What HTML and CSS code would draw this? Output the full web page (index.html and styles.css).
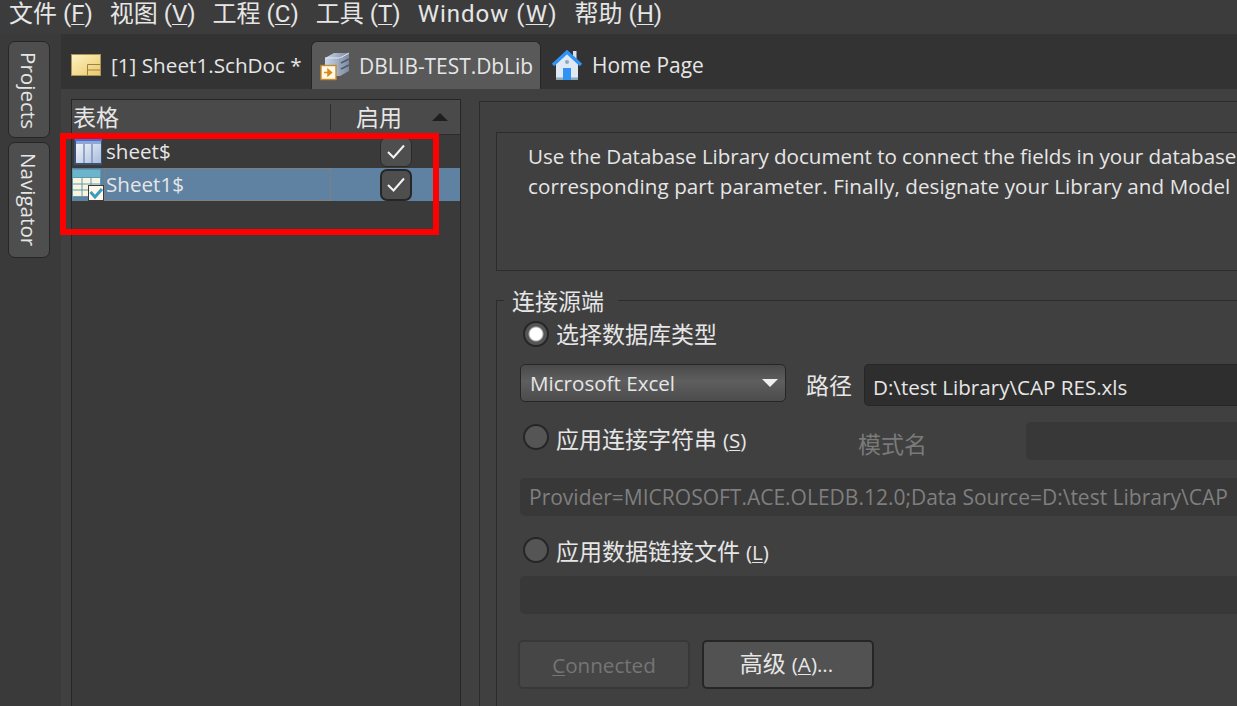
FILE: index.html
```html
<!DOCTYPE html>
<html lang="zh-CN">
<head>
  <meta charset="UTF-8">
  <title>DBLIB-TEST.DbLib</title>
  <link rel="stylesheet" href="styles.css">
</head>
<body>
  <div class="menu-bar">
    <span>文件 (<u>F</u>)</span>
    <span>视图 (<u>V</u>)</span>
    <span>工程 (<u>C</u>)</span>
    <span>工具 (<u>T</u>)</span>
    <span class="menu-latin">Window (<u>W</u>)</span>
    <span>帮助 (<u>H</u>)</span>
  </div>
  <div class="workspace">
    <div class="side-rail">
      <div class="side-tab tab-projects"><span>Projects</span></div>
      <div class="side-tab tab-navigator"><span>Navigator</span></div>
    </div>
    <div class="main">
      <div class="doc-tabs">
        <div class="doc-tab tab-sheet">
          <svg class="tab-icon" width="30" height="22" viewBox="0 0 30 22">
            <defs><linearGradient id="sheetFill" x1="0" y1="0" x2="1" y2="1"><stop offset="0" stop-color="#fdf3c4"/><stop offset="1" stop-color="#edc868"/></linearGradient></defs>
            <rect x="0.5" y="0.5" width="29" height="21" fill="url(#sheetFill)" stroke="#a8965c"/>
            <path d="M16.5 21V10.5H29.5M16.5 16H29.5" fill="none" stroke="#9a8445" stroke-width="1"/>
          </svg>
          <span>[1] Sheet1.SchDoc *</span>
        </div>
        <div class="doc-tab tab-dblib active">
          <svg class="tab-icon" width="30" height="30" viewBox="0 0 30 30">
            <defs><linearGradient id="boxFill" x1="0" y1="0" x2="1" y2="0"><stop offset="0" stop-color="#c9d6ea"/><stop offset="1" stop-color="#7c8aa0"/></linearGradient></defs>
            <path d="M5 7L14 2H29V20L20 25H5Z" fill="url(#boxFill)"/>
            <path d="M5 7H20L29 2" fill="none" stroke="#dfe6f2"/>
            <path d="M20 7V25" stroke="#8d99ad"/>
            <path d="M21 12L29 8M21 18L29 14" stroke="#4e5a6c" stroke-width="1.5"/>
            <rect x="1" y="14.5" width="15" height="14" fill="#fff8e4" stroke="#c58a2c" stroke-width="1.4"/>
            <path d="M4 21.5H10M8 18.5L11.5 21.5L8 24.5Z" fill="#d98a18" stroke="#d98a18" stroke-width="1.5"/>
          </svg>
          <span>DBLIB-TEST.DbLib</span>
        </div>
        <div class="doc-tab tab-home">
          <svg class="tab-icon" width="32" height="32" viewBox="0 0 32 32">
            <path d="M5 14L16 4L27 14V31H5Z" fill="#dfe8f3"/>
            <path d="M5 28.5H27V31H5Z" fill="#8fa9b8"/>
            <rect x="22" y="2" width="3.5" height="8" fill="#d9e2ea"/>
            <path d="M2 16L16 3L30 16" fill="none" stroke="#2f93f5" stroke-width="3.4"/>
            <circle cx="16" cy="13" r="2" fill="#8fa9b8"/>
            <rect x="12" y="19" width="8" height="12" fill="#2f93f5"/>
          </svg>
          <span>Home Page</span>
        </div>
      </div>
      <div class="doc-body">
        <div class="table-panel">
          <div class="table-head">
            <div class="head-name">表格</div>
            <div class="head-enabled">启用</div>
            <div class="sort-arrow"></div>
          </div>
          <div class="table-row">
            <div class="icon-slot">
              <svg class="icon-view" width="28" height="26" viewBox="0 0 28 26">
                <defs><linearGradient id="colFill" x1="0" y1="0" x2="1" y2="1"><stop offset="0" stop-color="#f6f9fe"/><stop offset="1" stop-color="#a9bcdc"/></linearGradient></defs>
                <rect x="0" y="0" width="28" height="26" fill="#3c5274"/>
                <rect x="1" y="0" width="27" height="2" fill="#3f6fe0"/>
                <rect x="2" y="2" width="25" height="22" fill="url(#colFill)"/>
                <rect x="2" y="2" width="25" height="3" fill="#8fa6d2"/>
                <path d="M10 5V24M18 5V24" stroke="#7f93b8" stroke-width="1.5"/>
              </svg>
            </div>
            <div class="cell-name">sheet$</div>
            <div class="cell-check"><span class="check-box"><svg width="18" height="15" viewBox="0 0 18 15"><path d="M1 8L6.5 13.5L17 1.5" fill="none" stroke="#f4f4f4" stroke-width="2"/></svg></span></div>
          </div>
          <div class="table-row selected">
            <div class="icon-slot">
              <svg width="32" height="32" viewBox="0 0 32 32">
                <rect x="0.5" y="0.5" width="28" height="27" fill="#fbf3dd" stroke="#5a9bb0"/>
                <rect x="0.5" y="0.5" width="28" height="8" fill="#6cb4cc" stroke="#5a9bb0"/>
                <path d="M1 15H28M1 21H28M10 9V27M19 9V27" stroke="#5a9bb0"/>
                <rect x="16.5" y="16.5" width="15" height="15" fill="#fdf8ea" stroke="#3c3c3c"/>
                <path d="M18.5 23L23 28L30 20" fill="none" stroke="#3a9dbf" stroke-width="3"/>
              </svg>
            </div>
            <div class="cell-name focused">Sheet1$</div>
            <div class="cell-check"><span class="check-box dark-edge"><svg width="18" height="15" viewBox="0 0 18 15"><path d="M1 8L6.5 13.5L17 1.5" fill="none" stroke="#f4f4f4" stroke-width="2"/></svg></span></div>
          </div>
        </div>
        <div class="settings-panel">
          <div class="info-box">
            <p class="info-first">Use the Database Library document to connect the fields in your database</p>
            <p class="info-second">corresponding part parameter. Finally, designate your Library and Model</p>
          </div>
          <div class="source-group">
            <div class="group-title">连接源端</div>
            <div class="radio-row first">
              <span class="radio checked"></span><span class="radio-text">选择数据库类型</span>
            </div>
            <div class="db-row">
              <div class="combo"><span>Microsoft Excel</span><i class="combo-arrow"></i></div>
              <span class="path-label">路径</span>
              <div class="path-input">D:\test Library\CAP RES.xls</div>
            </div>
            <div class="radio-row second">
              <span class="radio"></span><span class="radio-text">应用连接字符串 <small>(<u>S</u>)</small></span>
              <span class="schema-label">模式名</span>
              <div class="schema-input"></div>
            </div>
            <div class="field disabled-text">Provider=MICROSOFT.ACE.OLEDB.12.0;Data Source=D:\test Library\CAP</div>
            <div class="radio-row third">
              <span class="radio"></span><span class="radio-text">应用数据链接文件 <small>(<u>L</u>)</small></span>
            </div>
            <div class="field empty"></div>
            <div class="button-row">
              <div class="btn btn-off"><span><u>C</u>onnected</span></div>
              <div class="btn btn-on"><span>高级 <small>(<u>A</u>)...</small></span></div>
            </div>
          </div>
        </div>
      </div>
    </div>
  </div>
  <div class="red-mark"></div>
</body>
</html>
```

FILE: styles.css
```css
* { box-sizing: border-box; }
html, body {
  margin: 0;
  height: 100%;
  overflow: hidden;
}
body {
  width: 1237px;
  height: 706px;
  position: relative;
  background: #333;
  color: #e6e6e6;
  font-family: "Open Sans", "Noto Sans CJK SC", sans-serif;
  font-size: 20.6px;
  display: flex;
  flex-direction: column;
}
u { text-underline-offset: 2px; text-decoration-thickness: 1px; }
small { font-size: 20.6px; }

/* menu */
.menu-bar {
  height: 34px;
  flex: none;
  background: #3c3c3c;
  display: flex;
  align-items: flex-start;
  gap: 17px;
  padding-left: 9px;
  font-family: Roboto, "Noto Sans CJK SC", sans-serif;
  font-size: 24px;
  line-height: 29px;
  white-space: nowrap;
}
.menu-latin { letter-spacing: 1px; }

.workspace {
  flex: 1;
  display: flex;
  min-height: 0;
}

/* left rail */
.side-rail {
  width: 61px;
  flex: none;
  background: #3a3a3a;
  padding: 7px 0 0 8px;
  display: flex;
  flex-direction: column;
  gap: 4px;
}
.side-tab {
  width: 42px;
  background: #4e4e4e;
  border: 1px solid #262626;
  border-radius: 7px;
  writing-mode: vertical-rl;
  display: flex;
  align-items: center;
  padding-top: 10px;
}
.tab-projects { height: 97px; }
.tab-navigator { height: 116px; }

.main {
  flex: 1;
  display: flex;
  flex-direction: column;
  min-width: 0;
}

/* document tabs */
.doc-tabs {
  height: 55px;
  flex: none;
  background: #333;
  display: flex;
  align-items: flex-end;
  padding-left: 10px;
  white-space: nowrap;
}
.doc-tab {
  height: 48px;
  display: flex;
  align-items: center;
  font-size: 20.9px;
}
.tab-sheet { width: 240px; gap: 10px; font-size: 20.7px; }
.tab-dblib {
  width: 230px;
  gap: 9px;
  padding-left: 8px;
  background: #595959;
  border: 1px solid #262626;
  border-bottom: none;
  border-radius: 6px 6px 0 0;
}
.tab-home { gap: 9px; padding-left: 10px; }

.doc-body {
  flex: 1;
  background: #404040;
  display: flex;
  padding: 10px 0 0 10px;
  min-height: 0;
}

/* table list */
.table-panel {
  width: 390px;
  flex: none;
  border: 1px solid #262626;
  border-bottom: none;
  background: #3a3a3a;
}
.table-head {
  height: 35px;
  background: #4a4a4a;
  border-bottom: 1px solid #2c2c2c;
  display: flex;
  align-items: center;
  font-size: 23px;
}
.head-name {
  width: 259px;
  height: 26px;
  padding-left: 1px;
  line-height: 26px;
  border-right: 1px solid #2c2c2c;
}
.head-enabled {
  width: 96px;
  line-height: 26px;
  text-align: center;
}
.sort-arrow {
  width: 0;
  height: 0;
  border: 8px solid transparent;
  border-top: none;
  border-bottom-color: #1e1e1e;
  margin-left: 5px;
}
.table-row {
  height: 33px;
  display: flex;
  align-items: center;
}
.table-row.selected { background: #5f82a3; }
.icon-slot {
  width: 32px;
  height: 33px;
  flex: none;
  display: flex;
  align-items: center;
}
.icon-view { margin-left: 2px; }
.cell-name {
  width: 227px;
  height: 33px;
  flex: none;
  line-height: 33px;
  padding-left: 2px;
}
.cell-name.focused {
  border: 1px dotted #a07c58;
  padding-left: 1px;
  line-height: 31px;
}
.cell-check {
  width: 129px;
  flex: none;
  display: flex;
  justify-content: center;
}
.check-box {
  width: 32px;
  height: 30px;
  border-radius: 7px;
  background: #4e4e4e;
  border: 1px solid #2a2a2a;
  display: flex;
  align-items: center;
  justify-content: center;
}
.check-box.dark-edge { height: 32px; border: 2px solid #262626; }

/* right side */
.settings-panel {
  margin: 2px 0 0 18px;
  flex: 1;
  min-width: 0;
  border: 1px solid #2c2c2c;
  border-bottom: none;
  border-right: none;
  padding: 30px 0 0 16px;
  overflow: hidden;
}
.info-box {
  height: 139px;
  border: 1px solid #2c2c2c;
  border-right: none;
  padding: 8px 0 0 31px;
  white-space: nowrap;
  line-height: 30px;
}
.info-box p { margin: 0; }
.info-first { letter-spacing: -0.04px; }
.info-second { letter-spacing: 0.08px; }

.source-group {
  margin-top: 29px;
  border-top: 1px solid #2c2c2c;
  border-left: 1px solid #2c2c2c;
  height: 420px;
  padding-left: 23px;
}
.group-title {
  width: fit-content;
  margin: -15px 0 0 -16px;
  padding: 0 14px 0 8px;
  background: #404040;
  font-size: 23px;
  line-height: 30px;
}
.radio-row {
  display: flex;
  align-items: center;
  font-size: 23px;
  height: 30px;
  margin-left: 3px;
  white-space: nowrap;
}
.radio-row.first { margin-top: 3px; }
.radio-row.second {
  height: 38px;
  margin-top: 16px;
  align-items: flex-start;
}
.radio-row.third { margin-top: 19px; }
.radio {
  width: 26px;
  height: 26px;
  flex: none;
  border-radius: 50%;
  background: #555;
  border: 2px solid #262626;
  margin-right: 7px;
}
.second .radio { margin-top: 2px; }
.radio.checked {
  background: radial-gradient(circle, #fff 0, #fff 6px, #555 8px);
}
.radio-text { line-height: 30px; }
.second .radio-text {
  width: 302px;
  flex: none;
  margin-top: 2px;
}
.third .radio-text { margin-top: 2px; }
.db-row {
  display: flex;
  align-items: flex-start;
  margin-top: 15px;
}
.combo {
  width: 266px;
  height: 38px;
  flex: none;
  border: 1px solid #262626;
  border-radius: 5px;
  background: linear-gradient(#4a4a4a, #5e5e5e 45%, #4c4c4c);
  display: flex;
  align-items: center;
  justify-content: space-between;
  padding: 0 7px 0 9px;
  line-height: 30px;
}
.combo-arrow {
  width: 0;
  height: 0;
  border: 8px solid transparent;
  border-bottom: none;
  border-top-color: #f0f0f0;
}
.path-label {
  margin: 5px 0 0 20px;
  font-size: 23px;
  line-height: 32px;
  flex: none;
}
.path-input {
  margin-left: 12px;
  width: 500px;
  height: 42px;
  flex: none;
  border: 1px solid #262626;
  border-right: none;
  border-radius: 5px 0 0 5px;
  background: #2e2e2e;
  line-height: 45px;
  padding-left: 8px;
  white-space: nowrap;
}
.schema-label {
  width: 69px;
  flex: none;
  margin-top: 7px;
  line-height: 30px;
  color: #7a7a7a;
}
.schema-input {
  margin-left: 99px;
  width: 300px;
  height: 38px;
  flex: none;
  background: #383838;
  border-radius: 5px;
}
.field {
  margin-top: 18px;
  width: 800px;
  height: 38px;
  background: #383838;
  border-radius: 5px;
  padding-left: 9px;
  line-height: 38px;
  white-space: nowrap;
}
.disabled-text { color: #7f7f7f; font-size: 21px; }
.field.empty { margin-top: 11px; }
.button-row {
  display: flex;
  gap: 12px;
  margin-top: 26px;
}
.btn {
  width: 172px;
  height: 49px;
  border-radius: 5px;
  display: flex;
  align-items: center;
  justify-content: center;
  line-height: 30px;
  white-space: pre;
}
.btn-off {
  color: #757575;
  background: #464646;
  border: 2px solid #383838;
  margin-left: -2px;
}
.btn-on {
  background: #525252;
  border: 2px solid #262626;
  font-size: 23px;
  padding: 0 3px 2px 0;
}

/* annotation drawn over the screenshot */
.red-mark {
  position: absolute;
  left: 60px;
  top: 133px;
  width: 379px;
  height: 102px;
  border: 6px solid #f00;
}
```
